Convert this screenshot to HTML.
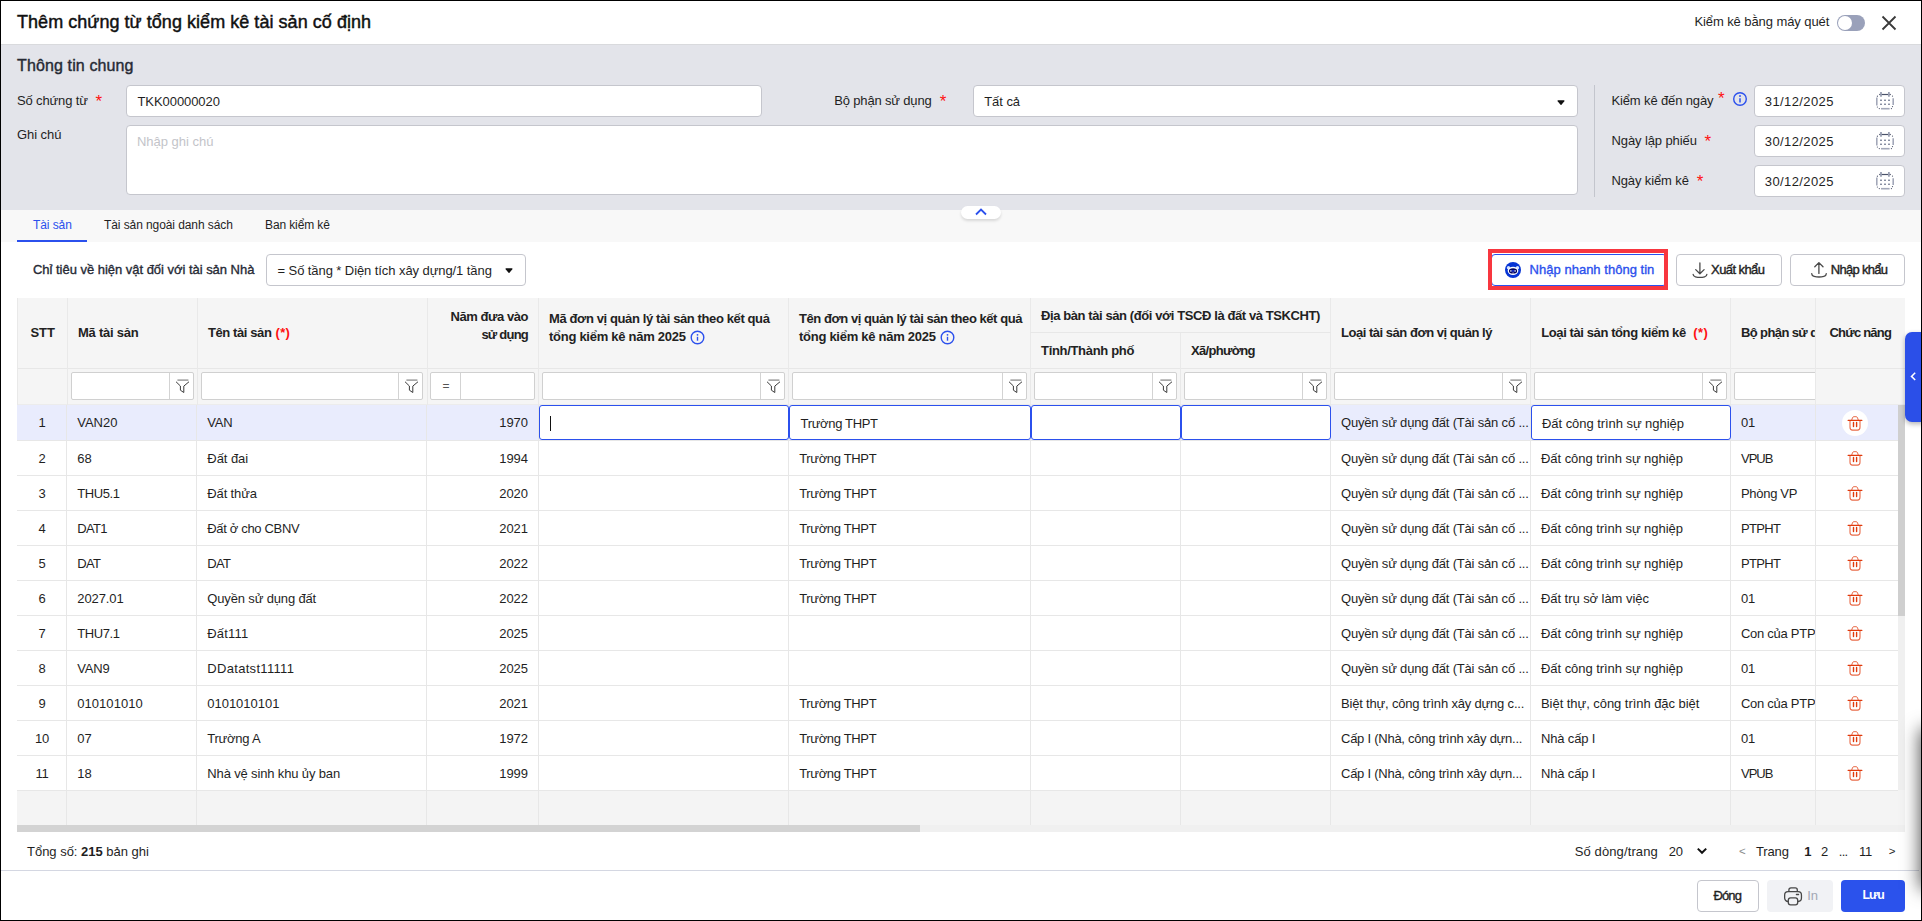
<!DOCTYPE html>
<html lang="vi"><head><meta charset="utf-8"><title>Thêm chứng từ tổng kiểm kê tài sản cố định</title>
<style>

html,body{margin:0;padding:0;}
body{width:1922px;height:921px;overflow:hidden;background:#fff;font-family:"Liberation Sans",sans-serif;}
#root{position:relative;width:1922px;height:921px;overflow:hidden;background:#fff;}
#root div,#root span.t,#root svg{position:absolute;box-sizing:border-box;}
.g{position:absolute;left:0;top:0;width:1922px;height:921px;display:block;}
span.t{white-space:pre;display:block;}
.inp{background:#fff;border:1px solid #c5c6cd;border-radius:4px;}
.fl{background:#fff;border:1px solid #d0d0d0;border-radius:2px;}
.vl{background:#e7e7e7;width:1px;}
.vlh{background:#e9e9e9;width:1px;}
.hl{background:#e7e7e7;height:1px;}
.ed{background:#fff;border:1.5px solid #2b50ed;border-radius:3px;}
</style></head><body>
<div id="root">
<header class="g">
<span class="t" style="top:12.76px;font-size:18px;line-height:18px;color:#111;letter-spacing:0.043px;-webkit-text-stroke:0.45px #111;left:17px;">Thêm chứng từ tổng kiểm kê tài sản cố định</span>
<span class="t" style="top:15.0px;font-size:13px;line-height:13px;color:#1f1f1f;letter-spacing:-0.084px;left:1694.4px;">Kiểm kê bằng máy quét</span>
<div style="left:1837px;top:15px;width:28px;height:16px;background:#9aa1ba;border-radius:8px;"></div>
<div style="left:1838px;top:16px;width:14px;height:14px;background:#fff;border-radius:7px;"></div>
<svg style="left:1881px;top:15px" width="16" height="16" viewBox="0 0 16 16"><path d="M1.5 1.5L14.5 14.5M14.5 1.5L1.5 14.5" stroke="#3a3a3a" stroke-width="1.8" fill="none"/></svg>
</header>
<section class="g">
<div style="left:0px;top:44px;width:1922px;height:166px;background:#e3e4ea;"></div>
<div style="left:0px;top:44px;width:1922px;height:1px;background:#d9dadd;"></div>
<span class="t" style="top:58.46px;font-size:16px;line-height:16px;color:#262a35;letter-spacing:0.124px;-webkit-text-stroke:0.4px #262a35;left:17px;">Thông tin chung</span>
<span class="t" style="top:94.0px;font-size:13px;line-height:13px;color:#1f1f1f;letter-spacing:-0.145px;left:17px;">Số chứng từ</span>
<span class="t" style="top:93.31px;font-size:17px;line-height:17px;color:#ff1111;left:95.4px;">*</span>
<div class="inp" style="left:126px;top:85px;width:636px;height:32px;"></div>
<span class="t" style="top:95.0px;font-size:13px;line-height:13px;color:#1f1f1f;letter-spacing:-0.073px;left:137.5px;">TKK00000020</span>
<span class="t" style="top:128.0px;font-size:13px;line-height:13px;color:#1f1f1f;letter-spacing:-0.07px;left:17px;">Ghi chú</span>
<div class="inp" style="left:126px;top:125px;width:1452px;height:70px;"></div>
<span class="t" style="top:135.0px;font-size:13px;line-height:13px;color:#c3c4c9;letter-spacing:-0.021px;left:137px;">Nhập ghi chú</span>
<span class="t" style="top:94.0px;font-size:13px;line-height:13px;color:#1f1f1f;letter-spacing:-0.171px;left:834.3px;">Bộ phận sử dụng</span>
<span class="t" style="top:93.01px;font-size:17px;line-height:17px;color:#ff1111;left:939.8000000000001px;">*</span>
<div class="inp" style="left:973px;top:85px;width:605px;height:32px;"></div>
<span class="t" style="top:95.0px;font-size:13px;line-height:13px;color:#1f1f1f;letter-spacing:-0.047px;left:984.2px;">Tất cả</span>
<svg style="left:1556.5px;top:99.6px" width="8" height="5.4" viewBox="0 0 8 5.4"><path d="M1 0.9h6L4 4.4z" fill="#111" stroke="#111" stroke-width="1.1" stroke-linejoin="round"/></svg>
<div style="left:1594px;top:85px;width:1px;height:112px;background:#c3c5cd;"></div>
<span class="t" style="top:94.0px;font-size:13px;line-height:13px;color:#1f1f1f;letter-spacing:-0.139px;left:1611.5px;">Kiểm kê đến ngày</span>
<span class="t" style="top:90.21px;font-size:17px;line-height:17px;color:#ff1111;left:1717.9px;">*</span>
<svg style="left:1732px;top:91px" width="16" height="16" viewBox="0 0 16 16"><circle cx="8" cy="8" r="6.3" fill="none" stroke="#2b50ed" stroke-width="1.4"/><path d="M8 7.2V11.6" stroke="#2b50ed" stroke-width="1.5"/><circle cx="8" cy="5" r="0.95" fill="#2b50ed"/></svg>
<div class="inp" style="left:1754px;top:85px;width:151px;height:32px;"></div>
<span class="t" style="top:94.5px;font-size:13px;line-height:13px;color:#1f1f1f;letter-spacing:0.4px;left:1764.8px;">31/12/2025</span>
<svg style="left:1876px;top:92px" width="18" height="18" viewBox="0 0 18 18" fill="none"><path d="M3.2 2.5H14.8" stroke="#4a5168" stroke-width="1.2"/><path d="M5 0V4.8M12.9 0V4.8" stroke="#9aa0b3" stroke-width="1.8"/><path d="M0.8 5.4V13.6M17.2 6.2V13" stroke="#a3a8b9" stroke-width="1.6"/><path d="M5 16.7H13.6" stroke="#a3a8b9" stroke-width="1.6"/><g fill="#4a5168"><circle cx="1.4" cy="4.2" r="0.6"/><circle cx="16.5" cy="4.1" r="0.6"/><circle cx="1.4" cy="15" r="0.6"/><circle cx="3.3" cy="16.6" r="0.6"/><circle cx="15.4" cy="16.6" r="0.6"/><circle cx="16.5" cy="14.6" r="0.6"/></g><g fill="#7d849a"><rect x="4" y="7.6" width="2" height="1.3"/><rect x="8" y="7.6" width="2" height="1.3"/><rect x="12" y="7.6" width="2" height="1.3"/><rect x="4" y="11.6" width="2" height="1.3"/><rect x="8" y="11.6" width="2" height="1.3"/><rect x="12" y="11.6" width="2" height="1.3"/></g></svg>
<div class="inp" style="left:1754px;top:125px;width:151px;height:32px;"></div>
<span class="t" style="top:134.5px;font-size:13px;line-height:13px;color:#1f1f1f;letter-spacing:0.4px;left:1764.8px;">30/12/2025</span>
<svg style="left:1876px;top:132px" width="18" height="18" viewBox="0 0 18 18" fill="none"><path d="M3.2 2.5H14.8" stroke="#4a5168" stroke-width="1.2"/><path d="M5 0V4.8M12.9 0V4.8" stroke="#9aa0b3" stroke-width="1.8"/><path d="M0.8 5.4V13.6M17.2 6.2V13" stroke="#a3a8b9" stroke-width="1.6"/><path d="M5 16.7H13.6" stroke="#a3a8b9" stroke-width="1.6"/><g fill="#4a5168"><circle cx="1.4" cy="4.2" r="0.6"/><circle cx="16.5" cy="4.1" r="0.6"/><circle cx="1.4" cy="15" r="0.6"/><circle cx="3.3" cy="16.6" r="0.6"/><circle cx="15.4" cy="16.6" r="0.6"/><circle cx="16.5" cy="14.6" r="0.6"/></g><g fill="#7d849a"><rect x="4" y="7.6" width="2" height="1.3"/><rect x="8" y="7.6" width="2" height="1.3"/><rect x="12" y="7.6" width="2" height="1.3"/><rect x="4" y="11.6" width="2" height="1.3"/><rect x="8" y="11.6" width="2" height="1.3"/><rect x="12" y="11.6" width="2" height="1.3"/></g></svg>
<span class="t" style="top:134.0px;font-size:13px;line-height:13px;color:#1f1f1f;letter-spacing:-0.103px;left:1611.5px;">Ngày lập phiếu</span>
<span class="t" style="top:133.01px;font-size:17px;line-height:17px;color:#ff1111;left:1704.5px;">*</span>
<div class="inp" style="left:1754px;top:165px;width:151px;height:32px;"></div>
<span class="t" style="top:174.5px;font-size:13px;line-height:13px;color:#1f1f1f;letter-spacing:0.4px;left:1764.8px;">30/12/2025</span>
<svg style="left:1876px;top:172px" width="18" height="18" viewBox="0 0 18 18" fill="none"><path d="M3.2 2.5H14.8" stroke="#4a5168" stroke-width="1.2"/><path d="M5 0V4.8M12.9 0V4.8" stroke="#9aa0b3" stroke-width="1.8"/><path d="M0.8 5.4V13.6M17.2 6.2V13" stroke="#a3a8b9" stroke-width="1.6"/><path d="M5 16.7H13.6" stroke="#a3a8b9" stroke-width="1.6"/><g fill="#4a5168"><circle cx="1.4" cy="4.2" r="0.6"/><circle cx="16.5" cy="4.1" r="0.6"/><circle cx="1.4" cy="15" r="0.6"/><circle cx="3.3" cy="16.6" r="0.6"/><circle cx="15.4" cy="16.6" r="0.6"/><circle cx="16.5" cy="14.6" r="0.6"/></g><g fill="#7d849a"><rect x="4" y="7.6" width="2" height="1.3"/><rect x="8" y="7.6" width="2" height="1.3"/><rect x="12" y="7.6" width="2" height="1.3"/><rect x="4" y="11.6" width="2" height="1.3"/><rect x="8" y="11.6" width="2" height="1.3"/><rect x="12" y="11.6" width="2" height="1.3"/></g></svg>
<span class="t" style="top:174.0px;font-size:13px;line-height:13px;color:#1f1f1f;letter-spacing:-0.124px;left:1611.5px;">Ngày kiểm kê</span>
<span class="t" style="top:173.11px;font-size:17px;line-height:17px;color:#ff1111;left:1696.7px;">*</span>
</section>
<nav class="g">
<div style="left:0px;top:210px;width:1922px;height:32px;background:#f8f8f8;"></div>
<span class="t" style="top:218.84px;font-size:12px;line-height:12px;color:#2b50ed;letter-spacing:-0.083px;left:33px;">Tài sản</span>
<span class="t" style="top:218.84px;font-size:12px;line-height:12px;color:#1f1f1f;letter-spacing:-0.087px;left:104px;">Tài sản ngoài danh sách</span>
<span class="t" style="top:218.84px;font-size:12px;line-height:12px;color:#1f1f1f;letter-spacing:-0.117px;left:265px;">Ban kiểm kê</span>
<div style="left:17px;top:240px;width:70px;height:2px;background:#2b50ed;"></div>
<div style="left:961px;top:205.5px;width:40px;height:13.5px;background:#fff;border-radius:7px;box-shadow:0 2px 3px rgba(0,0,0,0.13);"></div>
<svg style="left:974px;top:207.4px" width="14" height="10" viewBox="0 0 14 10"><path d="M2 7.5L7 2.5L12 7.5" stroke="#2b50ed" stroke-width="1.8" fill="none"/></svg>
</nav>
<section class="g">
<span class="t" style="top:262.5px;font-size:13px;line-height:13px;color:#262a35;letter-spacing:-0.026px;-webkit-text-stroke:0.35px #262a35;left:33px;">Chỉ tiêu về hiện vật đối với tài sản Nhà</span>
<div class="inp" style="left:266px;top:254px;width:260px;height:32px;"></div>
<span class="t" style="top:263.5px;font-size:13px;line-height:13px;color:#1f1f1f;letter-spacing:-0.079px;left:277.5px;">= Số tầng * Diện tích xây dựng/1 tầng</span>
<svg style="left:504.5px;top:268px" width="8" height="5.4" viewBox="0 0 8 5.4"><path d="M1 0.9h6L4 4.4z" fill="#111" stroke="#111" stroke-width="1.1" stroke-linejoin="round"/></svg>
<div style="left:1491px;top:254px;width:176px;height:32px;background:#fff;border:1px solid #2b50ed;border-radius:4px;"></div>
<svg style="left:1505px;top:262px" width="16" height="16" viewBox="0 0 16 16"><circle cx="8" cy="8" r="8" fill="#0634d4"/><circle cx="3.5" cy="5.7" r="1.7" fill="#d3e2ff"/><circle cx="12.5" cy="5.7" r="1.7" fill="#d3e2ff"/><ellipse cx="8" cy="8.8" rx="5.3" ry="4.1" fill="#fff"/><ellipse cx="8.05" cy="8.95" rx="4.1" ry="2.6" fill="#03035c"/><rect x="5" y="8.1" width="6" height="1.6" fill="#1a2fd0"/><rect x="5" y="8.1" width="1.6" height="1.6" fill="#a4a9ba"/><rect x="9.4" y="8.1" width="1.6" height="1.6" fill="#a4a9ba"/><rect x="7.3" y="10.6" width="1.6" height="0.7" fill="#b9bde0"/></svg>
<span class="t" style="top:263.0px;font-size:13px;line-height:13px;color:#2b50ed;letter-spacing:0.019px;-webkit-text-stroke:0.35px #2b50ed;left:1529.6px;">Nhập nhanh thông tin</span>
<div style="left:1488px;top:249px;width:180px;height:41px;border:4px solid #f8363f;"></div>
<div class="inp" style="left:1676px;top:254px;width:106px;height:32px;"></div>
<svg style="left:1692px;top:262px" width="16" height="17" viewBox="0 0 16 17" fill="none" stroke="#4a4a4a" stroke-width="1.3" stroke-linecap="round" stroke-linejoin="round"><path d="M7.9 0.9V11.6M3.7 7.6L7.9 11.8L12.1 7.6"/><path d="M1.1 12.3Q1.2 14.3 3.4 14.8Q8 15.9 12.6 14.8Q14.8 14.3 14.9 12.3"/></svg>
<span class="t" style="top:262.6px;font-size:13px;line-height:13px;color:#1f1f1f;letter-spacing:-0.595px;-webkit-text-stroke:0.4px #1f1f1f;left:1711.1px;">Xuất khẩu</span>
<div class="inp" style="left:1790px;top:254px;width:115px;height:32px;"></div>
<svg style="left:1811px;top:262px" width="16" height="17" viewBox="0 0 16 17" fill="none" stroke="#4a4a4a" stroke-width="1.3" stroke-linecap="round" stroke-linejoin="round"><path d="M7.9 11.4V0.7M3.8 4.8L7.9 0.6L12 4.8"/><path d="M0.7 11.6Q0.8 13.8 3.1 14.4Q8 15.6 12.9 14.4Q15.2 13.8 15.3 11.6"/></svg>
<span class="t" style="top:262.7px;font-size:13px;line-height:13px;color:#1f1f1f;letter-spacing:-0.688px;-webkit-text-stroke:0.4px #1f1f1f;left:1830.7px;">Nhập khẩu</span>
</section>
<main class="g">
<div style="left:17px;top:298px;width:1888px;height:107px;background:#f5f5f5;"></div>
<div style="left:17px;top:790px;width:1888px;height:35px;background:#f4f4f4;"></div>
<div style="left:17px;top:825px;width:1888px;height:7px;background:#f0f0f0;"></div>
<div style="left:17px;top:825px;width:903px;height:7px;background:#d3d3d3;"></div>
<div style="left:17px;top:405px;width:1881px;height:35px;background:#e9ecfd;"></div>
<div class="hl" style="left:17px;top:440px;width:1881px;height:1px;"></div>
<div class="hl" style="left:17px;top:475px;width:1881px;height:1px;"></div>
<div class="hl" style="left:17px;top:510px;width:1881px;height:1px;"></div>
<div class="hl" style="left:17px;top:545px;width:1881px;height:1px;"></div>
<div class="hl" style="left:17px;top:580px;width:1881px;height:1px;"></div>
<div class="hl" style="left:17px;top:615px;width:1881px;height:1px;"></div>
<div class="hl" style="left:17px;top:650px;width:1881px;height:1px;"></div>
<div class="hl" style="left:17px;top:685px;width:1881px;height:1px;"></div>
<div class="hl" style="left:17px;top:720px;width:1881px;height:1px;"></div>
<div class="hl" style="left:17px;top:755px;width:1881px;height:1px;"></div>
<div class="hl" style="left:17px;top:790px;width:1881px;height:1px;"></div>
<div class="hl" style="left:17px;top:368px;width:1888px;height:1px;"></div>
<div style="left:17px;top:404px;width:1888px;height:1px;background:#ececec;"></div>
<div class="vlh" style="left:17px;top:298px;width:1px;height:107px;"></div>
<div class="vlh" style="left:67px;top:298px;width:1px;height:107px;"></div>
<div class="vl" style="left:66px;top:405px;width:1px;height:420px;"></div>
<div class="vlh" style="left:197px;top:298px;width:1px;height:107px;"></div>
<div class="vl" style="left:196px;top:405px;width:1px;height:420px;"></div>
<div class="vlh" style="left:427px;top:298px;width:1px;height:107px;"></div>
<div class="vl" style="left:426px;top:405px;width:1px;height:420px;"></div>
<div class="vlh" style="left:538px;top:298px;width:1px;height:107px;"></div>
<div class="vl" style="left:538px;top:405px;width:1px;height:420px;"></div>
<div class="vlh" style="left:788px;top:298px;width:1px;height:107px;"></div>
<div class="vl" style="left:788px;top:405px;width:1px;height:420px;"></div>
<div class="vlh" style="left:1030px;top:298px;width:1px;height:107px;"></div>
<div class="vl" style="left:1030px;top:405px;width:1px;height:420px;"></div>
<div class="vlh" style="left:1180px;top:333px;width:1px;height:72px;"></div>
<div class="vl" style="left:1180px;top:405px;width:1px;height:420px;"></div>
<div class="vlh" style="left:1330px;top:298px;width:1px;height:107px;"></div>
<div class="vl" style="left:1330px;top:405px;width:1px;height:420px;"></div>
<div class="vlh" style="left:1530px;top:298px;width:1px;height:107px;"></div>
<div class="vl" style="left:1530px;top:405px;width:1px;height:420px;"></div>
<div class="vlh" style="left:1730px;top:298px;width:1px;height:107px;"></div>
<div class="vl" style="left:1730px;top:405px;width:1px;height:420px;"></div>
<div class="vlh" style="left:1815px;top:298px;width:1px;height:107px;"></div>
<div class="vl" style="left:1815px;top:405px;width:1px;height:420px;"></div>
<div class="hl" style="left:1030px;top:332px;width:301px;height:1px;"></div>
<div style="left:1898px;top:405px;width:7px;height:385px;background:#f0f0f0;"></div>
<div style="left:1898px;top:405px;width:7px;height:211px;background:#cfcfcf;"></div>
<span class="t" style="top:326.0px;font-size:13px;line-height:13px;color:#222;font-weight:700;letter-spacing:-0.086px;left:30.5px;">STT</span>
<span class="t" style="top:326.0px;font-size:13px;line-height:13px;color:#222;font-weight:700;letter-spacing:-0.23px;left:78px;">Mã tài sản</span>
<span class="t" style="top:326.0px;font-size:13px;line-height:13px;color:#222;font-weight:700;letter-spacing:-0.403px;left:208px;">Tên tài sản</span>
<span class="t" style="top:326.0px;font-size:13px;line-height:13px;color:#ff1111;font-weight:700;letter-spacing:0.336px;left:275.5px;">(*)</span>
<span class="t" style="top:310.0px;font-size:13px;line-height:13px;color:#222;font-weight:700;letter-spacing:-0.45px;right:1394px;">Năm đưa vào</span>
<span class="t" style="top:328.0px;font-size:13px;line-height:13px;color:#222;font-weight:700;letter-spacing:-0.774px;right:1394px;">sử dụng</span>
<span class="t" style="top:312.0px;font-size:13px;line-height:13px;color:#222;font-weight:700;letter-spacing:-0.391px;left:549px;">Mã đơn vị quản lý tài sản theo kết quả</span>
<span class="t" style="top:330.0px;font-size:13px;line-height:13px;color:#222;font-weight:700;letter-spacing:-0.273px;left:549px;">tổng kiểm kê năm 2025</span>
<span class="t" style="top:312.0px;font-size:13px;line-height:13px;color:#222;font-weight:700;letter-spacing:-0.448px;left:799px;">Tên đơn vị quản lý tài sản theo kết quả</span>
<span class="t" style="top:330.0px;font-size:13px;line-height:13px;color:#222;font-weight:700;letter-spacing:-0.273px;left:799px;">tổng kiểm kê năm 2025</span>
<svg style="left:689.5px;top:330.2px" width="15" height="15" viewBox="0 0 15 15"><g transform="translate(0.5 0.5)"><circle cx="7" cy="7" r="6.3" fill="none" stroke="#2b50ed" stroke-width="1.4"/><path d="M7 6.3V10.2" stroke="#2b50ed" stroke-width="1.4"/><circle cx="7" cy="4.3" r="0.9" fill="#2b50ed"/></g></svg>
<svg style="left:939.5px;top:330.2px" width="15" height="15" viewBox="0 0 15 15"><g transform="translate(0.5 0.5)"><circle cx="7" cy="7" r="6.3" fill="none" stroke="#2b50ed" stroke-width="1.4"/><path d="M7 6.3V10.2" stroke="#2b50ed" stroke-width="1.4"/><circle cx="7" cy="4.3" r="0.9" fill="#2b50ed"/></g></svg>
<span class="t" style="top:309.0px;font-size:13px;line-height:13px;color:#222;font-weight:700;letter-spacing:-0.409px;left:1041px;">Địa bàn tài sản (đối với TSCĐ là đất và TSKCHT)</span>
<span class="t" style="top:344.0px;font-size:13px;line-height:13px;color:#222;font-weight:700;letter-spacing:-0.315px;left:1041px;">Tỉnh/Thành phố</span>
<span class="t" style="top:344.0px;font-size:13px;line-height:13px;color:#222;font-weight:700;letter-spacing:-0.693px;left:1191px;">Xã/phường</span>
<span class="t" style="top:326.0px;font-size:13px;line-height:13px;color:#222;font-weight:700;letter-spacing:-0.478px;left:1341px;">Loại tài sản đơn vị quản lý</span>
<span class="t" style="top:326.0px;font-size:13px;line-height:13px;color:#222;font-weight:700;letter-spacing:-0.405px;left:1541.3px;">Loại tài sản tổng kiểm kê</span>
<span class="t" style="top:326.0px;font-size:13px;line-height:13px;color:#ff1111;font-weight:700;letter-spacing:0.4px;left:1693.2px;">(*)</span>
<span class="t" style="top:326.0px;font-size:13px;line-height:13px;color:#222;font-weight:700;letter-spacing:-0.61px;left:1741px;width:74px;overflow:hidden;">Bộ phận sử dụng</span>
<div style="left:1816px;top:298px;width:89px;height:70px;background:#f5f5f5;"></div>
<span class="t" style="top:326.0px;font-size:13px;line-height:13px;color:#222;font-weight:700;letter-spacing:-0.781px;left:1829.5px;">Chức năng</span>
<div class="fl" style="left:71px;top:372px;width:123px;height:28px;"></div>
<div style="left:169px;top:373px;width:1px;height:26px;background:#d3d3d3;"></div>
<svg style="left:174.7px;top:379px" width="15" height="15" viewBox="0 0 15 15" fill="none" stroke="#3a3a3a" stroke-width="1" stroke-linejoin="round" stroke-linecap="round"><path d="M2.4 1.1H13.4" stroke="#8c8c8c" stroke-width="1.3" stroke-linecap="butt"/><path d="M1.3 3L5.4 7V11.2L8.8 13.5V7.1L13.7 3"/></svg>
<div class="fl" style="left:201px;top:372px;width:222px;height:28px;"></div>
<div style="left:398px;top:373px;width:1px;height:26px;background:#d3d3d3;"></div>
<svg style="left:403.7px;top:379px" width="15" height="15" viewBox="0 0 15 15" fill="none" stroke="#3a3a3a" stroke-width="1" stroke-linejoin="round" stroke-linecap="round"><path d="M2.4 1.1H13.4" stroke="#8c8c8c" stroke-width="1.3" stroke-linecap="butt"/><path d="M1.3 3L5.4 7V11.2L8.8 13.5V7.1L13.7 3"/></svg>
<div class="fl" style="left:430px;top:372px;width:105px;height:28px;"></div>
<div style="left:460px;top:373px;width:1px;height:26px;background:#d3d3d3;"></div>
<span class="t" style="top:379.84px;font-size:12px;line-height:12px;color:#555;letter-spacing:-0.1px;left:442.5px;">=</span>
<div class="fl" style="left:542px;top:372px;width:243px;height:28px;"></div>
<div style="left:760px;top:373px;width:1px;height:26px;background:#d3d3d3;"></div>
<svg style="left:765.7px;top:379px" width="15" height="15" viewBox="0 0 15 15" fill="none" stroke="#3a3a3a" stroke-width="1" stroke-linejoin="round" stroke-linecap="round"><path d="M2.4 1.1H13.4" stroke="#8c8c8c" stroke-width="1.3" stroke-linecap="butt"/><path d="M1.3 3L5.4 7V11.2L8.8 13.5V7.1L13.7 3"/></svg>
<div class="fl" style="left:792px;top:372px;width:235px;height:28px;"></div>
<div style="left:1002px;top:373px;width:1px;height:26px;background:#d3d3d3;"></div>
<svg style="left:1007.7px;top:379px" width="15" height="15" viewBox="0 0 15 15" fill="none" stroke="#3a3a3a" stroke-width="1" stroke-linejoin="round" stroke-linecap="round"><path d="M2.4 1.1H13.4" stroke="#8c8c8c" stroke-width="1.3" stroke-linecap="butt"/><path d="M1.3 3L5.4 7V11.2L8.8 13.5V7.1L13.7 3"/></svg>
<div class="fl" style="left:1034px;top:372px;width:143px;height:28px;"></div>
<div style="left:1152px;top:373px;width:1px;height:26px;background:#d3d3d3;"></div>
<svg style="left:1157.7px;top:379px" width="15" height="15" viewBox="0 0 15 15" fill="none" stroke="#3a3a3a" stroke-width="1" stroke-linejoin="round" stroke-linecap="round"><path d="M2.4 1.1H13.4" stroke="#8c8c8c" stroke-width="1.3" stroke-linecap="butt"/><path d="M1.3 3L5.4 7V11.2L8.8 13.5V7.1L13.7 3"/></svg>
<div class="fl" style="left:1184px;top:372px;width:143px;height:28px;"></div>
<div style="left:1302px;top:373px;width:1px;height:26px;background:#d3d3d3;"></div>
<svg style="left:1307.7px;top:379px" width="15" height="15" viewBox="0 0 15 15" fill="none" stroke="#3a3a3a" stroke-width="1" stroke-linejoin="round" stroke-linecap="round"><path d="M2.4 1.1H13.4" stroke="#8c8c8c" stroke-width="1.3" stroke-linecap="butt"/><path d="M1.3 3L5.4 7V11.2L8.8 13.5V7.1L13.7 3"/></svg>
<div class="fl" style="left:1334px;top:372px;width:193px;height:28px;"></div>
<div style="left:1502px;top:373px;width:1px;height:26px;background:#d3d3d3;"></div>
<svg style="left:1507.7px;top:379px" width="15" height="15" viewBox="0 0 15 15" fill="none" stroke="#3a3a3a" stroke-width="1" stroke-linejoin="round" stroke-linecap="round"><path d="M2.4 1.1H13.4" stroke="#8c8c8c" stroke-width="1.3" stroke-linecap="butt"/><path d="M1.3 3L5.4 7V11.2L8.8 13.5V7.1L13.7 3"/></svg>
<div class="fl" style="left:1534px;top:372px;width:193px;height:28px;"></div>
<div style="left:1702px;top:373px;width:1px;height:26px;background:#d3d3d3;"></div>
<svg style="left:1707.7px;top:379px" width="15" height="15" viewBox="0 0 15 15" fill="none" stroke="#3a3a3a" stroke-width="1" stroke-linejoin="round" stroke-linecap="round"><path d="M2.4 1.1H13.4" stroke="#8c8c8c" stroke-width="1.3" stroke-linecap="butt"/><path d="M1.3 3L5.4 7V11.2L8.8 13.5V7.1L13.7 3"/></svg>
<div class="fl" style="left:1734px;top:372px;width:90px;height:28px;"></div>
<div style="left:1815px;top:369px;width:90px;height:35px;background:#f5f5f5;"></div>
<div class="vlh" style="left:1815px;top:298px;width:1px;height:107px;"></div>
<div class="vl" style="left:1815px;top:405px;width:1px;height:420px;"></div>
<div class="ed" style="left:539px;top:405px;width:250px;height:35px;"></div>
<div class="ed" style="left:789px;top:405px;width:242px;height:35px;"></div>
<div class="ed" style="left:1031px;top:405px;width:150px;height:35px;"></div>
<div class="ed" style="left:1181px;top:405px;width:150px;height:35px;"></div>
<div class="ed" style="left:1531px;top:405px;width:200px;height:35px;"></div>
<div style="left:550px;top:416px;width:1px;height:15px;background:#111;"></div>
<span class="t" style="top:416.0px;font-size:13px;line-height:13px;color:#1f1f1f;letter-spacing:-0.15px;left:-158px;width:400px;text-align:center;">1</span>
<span class="t" style="top:416.0px;font-size:13px;line-height:13px;color:#1f1f1f;letter-spacing:-0.036px;left:77.3px;">VAN20</span>
<span class="t" style="top:416.0px;font-size:13px;line-height:13px;color:#1f1f1f;letter-spacing:-0.188px;left:207.3px;">VAN</span>
<span class="t" style="top:416.0px;font-size:13px;line-height:13px;color:#1f1f1f;letter-spacing:-0.111px;right:1394.2px;">1970</span>
<span class="t" style="top:417.0px;font-size:13px;line-height:13px;color:#1f1f1f;letter-spacing:-0.341px;left:800.6px;">Trường THPT</span>
<span class="t" style="top:416.0px;font-size:13px;line-height:13px;color:#1f1f1f;letter-spacing:-0.182px;left:1341px;">Quyền sử dụng đất (Tài sản cố ...</span>
<span class="t" style="top:417.0px;font-size:13px;line-height:13px;color:#1f1f1f;letter-spacing:-0.054px;left:1542px;">Đất công trình sự nghiệp</span>
<span class="t" style="top:416.0px;font-size:13px;line-height:13px;color:#1f1f1f;letter-spacing:-0.15px;left:1741px;">01</span>
<div style="left:1842px;top:410px;width:26px;height:26px;background:#fff;border-radius:13px;"></div>
<svg style="left:1847px;top:415px" width="16" height="16" viewBox="0 0 16 16" fill="none" stroke="#e03a0c"><path d="M1.2 5.45H14.8" stroke-width="1.3" stroke-linecap="round"/><path d="M4.7 5.1L5.5 2.7Q5.9 1.7 7 1.7H9Q10.1 1.7 10.5 2.7L11.3 5.1" stroke-width="1" opacity=".75"/><path d="M3 5.8V12.3Q3 15.1 5.5 15.1H10.5Q13 15.1 13 12.3V5.8" stroke-width="1.1" opacity=".75"/><path d="M6.5 7.4V11.6M9.6 7.4V11.6" stroke-width="1.4" stroke-linecap="round"/></svg>
<span class="t" style="top:452.0px;font-size:13px;line-height:13px;color:#1f1f1f;letter-spacing:-0.15px;left:-158px;width:400px;text-align:center;">2</span>
<span class="t" style="top:452.0px;font-size:13px;line-height:13px;color:#1f1f1f;letter-spacing:-0.15px;left:77.3px;">68</span>
<span class="t" style="top:452.0px;font-size:13px;line-height:13px;color:#1f1f1f;letter-spacing:-0.052px;left:207.3px;">Đất đai</span>
<span class="t" style="top:452.0px;font-size:13px;line-height:13px;color:#1f1f1f;letter-spacing:-0.111px;right:1394.2px;">1994</span>
<span class="t" style="top:452.0px;font-size:13px;line-height:13px;color:#1f1f1f;letter-spacing:-0.341px;left:799.2px;">Trường THPT</span>
<span class="t" style="top:452.0px;font-size:13px;line-height:13px;color:#1f1f1f;letter-spacing:-0.182px;left:1341px;">Quyền sử dụng đất (Tài sản cố ...</span>
<span class="t" style="top:452.0px;font-size:13px;line-height:13px;color:#1f1f1f;letter-spacing:-0.054px;left:1541px;">Đất công trình sự nghiệp</span>
<span class="t" style="top:452.0px;font-size:13px;line-height:13px;color:#1f1f1f;letter-spacing:-1.005px;left:1741px;">VPUB</span>
<svg style="left:1847px;top:450px" width="16" height="16" viewBox="0 0 16 16" fill="none" stroke="#e03a0c"><path d="M1.2 5.45H14.8" stroke-width="1.3" stroke-linecap="round"/><path d="M4.7 5.1L5.5 2.7Q5.9 1.7 7 1.7H9Q10.1 1.7 10.5 2.7L11.3 5.1" stroke-width="1" opacity=".75"/><path d="M3 5.8V12.3Q3 15.1 5.5 15.1H10.5Q13 15.1 13 12.3V5.8" stroke-width="1.1" opacity=".75"/><path d="M6.5 7.4V11.6M9.6 7.4V11.6" stroke-width="1.4" stroke-linecap="round"/></svg>
<span class="t" style="top:487.0px;font-size:13px;line-height:13px;color:#1f1f1f;letter-spacing:-0.15px;left:-158px;width:400px;text-align:center;">3</span>
<span class="t" style="top:487.0px;font-size:13px;line-height:13px;color:#1f1f1f;letter-spacing:-0.421px;left:77.3px;">THU5.1</span>
<span class="t" style="top:487.0px;font-size:13px;line-height:13px;color:#1f1f1f;letter-spacing:-0.134px;left:207.3px;">Đất thửa</span>
<span class="t" style="top:487.0px;font-size:13px;line-height:13px;color:#1f1f1f;letter-spacing:-0.111px;right:1394.2px;">2020</span>
<span class="t" style="top:487.0px;font-size:13px;line-height:13px;color:#1f1f1f;letter-spacing:-0.341px;left:799.2px;">Trường THPT</span>
<span class="t" style="top:487.0px;font-size:13px;line-height:13px;color:#1f1f1f;letter-spacing:-0.182px;left:1341px;">Quyền sử dụng đất (Tài sản cố ...</span>
<span class="t" style="top:487.0px;font-size:13px;line-height:13px;color:#1f1f1f;letter-spacing:-0.054px;left:1541px;">Đất công trình sự nghiệp</span>
<span class="t" style="top:487.0px;font-size:13px;line-height:13px;color:#1f1f1f;letter-spacing:-0.308px;left:1741px;">Phòng VP</span>
<svg style="left:1847px;top:485px" width="16" height="16" viewBox="0 0 16 16" fill="none" stroke="#e03a0c"><path d="M1.2 5.45H14.8" stroke-width="1.3" stroke-linecap="round"/><path d="M4.7 5.1L5.5 2.7Q5.9 1.7 7 1.7H9Q10.1 1.7 10.5 2.7L11.3 5.1" stroke-width="1" opacity=".75"/><path d="M3 5.8V12.3Q3 15.1 5.5 15.1H10.5Q13 15.1 13 12.3V5.8" stroke-width="1.1" opacity=".75"/><path d="M6.5 7.4V11.6M9.6 7.4V11.6" stroke-width="1.4" stroke-linecap="round"/></svg>
<span class="t" style="top:522.0px;font-size:13px;line-height:13px;color:#1f1f1f;letter-spacing:-0.15px;left:-158px;width:400px;text-align:center;">4</span>
<span class="t" style="top:522.0px;font-size:13px;line-height:13px;color:#1f1f1f;letter-spacing:-0.725px;left:77.3px;">DAT1</span>
<span class="t" style="top:522.0px;font-size:13px;line-height:13px;color:#1f1f1f;letter-spacing:-0.329px;left:207.3px;">Đất ở cho CBNV</span>
<span class="t" style="top:522.0px;font-size:13px;line-height:13px;color:#1f1f1f;letter-spacing:-0.111px;right:1394.2px;">2021</span>
<span class="t" style="top:522.0px;font-size:13px;line-height:13px;color:#1f1f1f;letter-spacing:-0.341px;left:799.2px;">Trường THPT</span>
<span class="t" style="top:522.0px;font-size:13px;line-height:13px;color:#1f1f1f;letter-spacing:-0.182px;left:1341px;">Quyền sử dụng đất (Tài sản cố ...</span>
<span class="t" style="top:522.0px;font-size:13px;line-height:13px;color:#1f1f1f;letter-spacing:-0.054px;left:1541px;">Đất công trình sự nghiệp</span>
<span class="t" style="top:522.0px;font-size:13px;line-height:13px;color:#1f1f1f;letter-spacing:-0.684px;left:1741px;">PTPHT</span>
<svg style="left:1847px;top:520px" width="16" height="16" viewBox="0 0 16 16" fill="none" stroke="#e03a0c"><path d="M1.2 5.45H14.8" stroke-width="1.3" stroke-linecap="round"/><path d="M4.7 5.1L5.5 2.7Q5.9 1.7 7 1.7H9Q10.1 1.7 10.5 2.7L11.3 5.1" stroke-width="1" opacity=".75"/><path d="M3 5.8V12.3Q3 15.1 5.5 15.1H10.5Q13 15.1 13 12.3V5.8" stroke-width="1.1" opacity=".75"/><path d="M6.5 7.4V11.6M9.6 7.4V11.6" stroke-width="1.4" stroke-linecap="round"/></svg>
<span class="t" style="top:557.0px;font-size:13px;line-height:13px;color:#1f1f1f;letter-spacing:-0.15px;left:-158px;width:400px;text-align:center;">5</span>
<span class="t" style="top:557.0px;font-size:13px;line-height:13px;color:#1f1f1f;letter-spacing:-0.678px;left:77.3px;">DAT</span>
<span class="t" style="top:557.0px;font-size:13px;line-height:13px;color:#1f1f1f;letter-spacing:-0.678px;left:207.3px;">DAT</span>
<span class="t" style="top:557.0px;font-size:13px;line-height:13px;color:#1f1f1f;letter-spacing:-0.111px;right:1394.2px;">2022</span>
<span class="t" style="top:557.0px;font-size:13px;line-height:13px;color:#1f1f1f;letter-spacing:-0.341px;left:799.2px;">Trường THPT</span>
<span class="t" style="top:557.0px;font-size:13px;line-height:13px;color:#1f1f1f;letter-spacing:-0.182px;left:1341px;">Quyền sử dụng đất (Tài sản cố ...</span>
<span class="t" style="top:557.0px;font-size:13px;line-height:13px;color:#1f1f1f;letter-spacing:-0.054px;left:1541px;">Đất công trình sự nghiệp</span>
<span class="t" style="top:557.0px;font-size:13px;line-height:13px;color:#1f1f1f;letter-spacing:-0.684px;left:1741px;">PTPHT</span>
<svg style="left:1847px;top:555px" width="16" height="16" viewBox="0 0 16 16" fill="none" stroke="#e03a0c"><path d="M1.2 5.45H14.8" stroke-width="1.3" stroke-linecap="round"/><path d="M4.7 5.1L5.5 2.7Q5.9 1.7 7 1.7H9Q10.1 1.7 10.5 2.7L11.3 5.1" stroke-width="1" opacity=".75"/><path d="M3 5.8V12.3Q3 15.1 5.5 15.1H10.5Q13 15.1 13 12.3V5.8" stroke-width="1.1" opacity=".75"/><path d="M6.5 7.4V11.6M9.6 7.4V11.6" stroke-width="1.4" stroke-linecap="round"/></svg>
<span class="t" style="top:592.0px;font-size:13px;line-height:13px;color:#1f1f1f;letter-spacing:-0.15px;left:-158px;width:400px;text-align:center;">6</span>
<span class="t" style="top:592.0px;font-size:13px;line-height:13px;color:#1f1f1f;letter-spacing:-0.102px;left:77.3px;">2027.01</span>
<span class="t" style="top:592.0px;font-size:13px;line-height:13px;color:#1f1f1f;letter-spacing:-0.153px;left:207.3px;">Quyền sử dụng đất</span>
<span class="t" style="top:592.0px;font-size:13px;line-height:13px;color:#1f1f1f;letter-spacing:-0.111px;right:1394.2px;">2022</span>
<span class="t" style="top:592.0px;font-size:13px;line-height:13px;color:#1f1f1f;letter-spacing:-0.341px;left:799.2px;">Trường THPT</span>
<span class="t" style="top:592.0px;font-size:13px;line-height:13px;color:#1f1f1f;letter-spacing:-0.182px;left:1341px;">Quyền sử dụng đất (Tài sản cố ...</span>
<span class="t" style="top:592.0px;font-size:13px;line-height:13px;color:#1f1f1f;letter-spacing:-0.059px;left:1541px;">Đất trụ sở làm việc</span>
<span class="t" style="top:592.0px;font-size:13px;line-height:13px;color:#1f1f1f;letter-spacing:-0.15px;left:1741px;">01</span>
<svg style="left:1847px;top:590px" width="16" height="16" viewBox="0 0 16 16" fill="none" stroke="#e03a0c"><path d="M1.2 5.45H14.8" stroke-width="1.3" stroke-linecap="round"/><path d="M4.7 5.1L5.5 2.7Q5.9 1.7 7 1.7H9Q10.1 1.7 10.5 2.7L11.3 5.1" stroke-width="1" opacity=".75"/><path d="M3 5.8V12.3Q3 15.1 5.5 15.1H10.5Q13 15.1 13 12.3V5.8" stroke-width="1.1" opacity=".75"/><path d="M6.5 7.4V11.6M9.6 7.4V11.6" stroke-width="1.4" stroke-linecap="round"/></svg>
<span class="t" style="top:627.0px;font-size:13px;line-height:13px;color:#1f1f1f;letter-spacing:-0.15px;left:-158px;width:400px;text-align:center;">7</span>
<span class="t" style="top:627.0px;font-size:13px;line-height:13px;color:#1f1f1f;letter-spacing:-0.421px;left:77.3px;">THU7.1</span>
<span class="t" style="top:627.0px;font-size:13px;line-height:13px;color:#1f1f1f;letter-spacing:0.178px;left:207.3px;">Đất111</span>
<span class="t" style="top:627.0px;font-size:13px;line-height:13px;color:#1f1f1f;letter-spacing:-0.111px;right:1394.2px;">2025</span>
<span class="t" style="top:627.0px;font-size:13px;line-height:13px;color:#1f1f1f;letter-spacing:-0.182px;left:1341px;">Quyền sử dụng đất (Tài sản cố ...</span>
<span class="t" style="top:627.0px;font-size:13px;line-height:13px;color:#1f1f1f;letter-spacing:-0.054px;left:1541px;">Đất công trình sự nghiệp</span>
<span class="t" style="top:627.0px;font-size:13px;line-height:13px;color:#1f1f1f;letter-spacing:-0.272px;left:1741px;width:74px;overflow:hidden;">Con của PTPHT</span>
<svg style="left:1847px;top:625px" width="16" height="16" viewBox="0 0 16 16" fill="none" stroke="#e03a0c"><path d="M1.2 5.45H14.8" stroke-width="1.3" stroke-linecap="round"/><path d="M4.7 5.1L5.5 2.7Q5.9 1.7 7 1.7H9Q10.1 1.7 10.5 2.7L11.3 5.1" stroke-width="1" opacity=".75"/><path d="M3 5.8V12.3Q3 15.1 5.5 15.1H10.5Q13 15.1 13 12.3V5.8" stroke-width="1.1" opacity=".75"/><path d="M6.5 7.4V11.6M9.6 7.4V11.6" stroke-width="1.4" stroke-linecap="round"/></svg>
<span class="t" style="top:662.0px;font-size:13px;line-height:13px;color:#1f1f1f;letter-spacing:-0.15px;left:-158px;width:400px;text-align:center;">8</span>
<span class="t" style="top:662.0px;font-size:13px;line-height:13px;color:#1f1f1f;letter-spacing:-0.203px;left:77.3px;">VAN9</span>
<span class="t" style="top:662.0px;font-size:13px;line-height:13px;color:#1f1f1f;letter-spacing:0.31px;left:207.3px;">DDatatst11111</span>
<span class="t" style="top:662.0px;font-size:13px;line-height:13px;color:#1f1f1f;letter-spacing:-0.111px;right:1394.2px;">2025</span>
<span class="t" style="top:662.0px;font-size:13px;line-height:13px;color:#1f1f1f;letter-spacing:-0.182px;left:1341px;">Quyền sử dụng đất (Tài sản cố ...</span>
<span class="t" style="top:662.0px;font-size:13px;line-height:13px;color:#1f1f1f;letter-spacing:-0.054px;left:1541px;">Đất công trình sự nghiệp</span>
<span class="t" style="top:662.0px;font-size:13px;line-height:13px;color:#1f1f1f;letter-spacing:-0.15px;left:1741px;">01</span>
<svg style="left:1847px;top:660px" width="16" height="16" viewBox="0 0 16 16" fill="none" stroke="#e03a0c"><path d="M1.2 5.45H14.8" stroke-width="1.3" stroke-linecap="round"/><path d="M4.7 5.1L5.5 2.7Q5.9 1.7 7 1.7H9Q10.1 1.7 10.5 2.7L11.3 5.1" stroke-width="1" opacity=".75"/><path d="M3 5.8V12.3Q3 15.1 5.5 15.1H10.5Q13 15.1 13 12.3V5.8" stroke-width="1.1" opacity=".75"/><path d="M6.5 7.4V11.6M9.6 7.4V11.6" stroke-width="1.4" stroke-linecap="round"/></svg>
<span class="t" style="top:697.0px;font-size:13px;line-height:13px;color:#1f1f1f;letter-spacing:-0.15px;left:-158px;width:400px;text-align:center;">9</span>
<span class="t" style="top:697.0px;font-size:13px;line-height:13px;color:#1f1f1f;letter-spacing:0.039px;left:77.3px;">010101010</span>
<span class="t" style="top:697.0px;font-size:13px;line-height:13px;color:#1f1f1f;letter-spacing:-0.025px;left:207.3px;">0101010101</span>
<span class="t" style="top:697.0px;font-size:13px;line-height:13px;color:#1f1f1f;letter-spacing:-0.111px;right:1394.2px;">2021</span>
<span class="t" style="top:697.0px;font-size:13px;line-height:13px;color:#1f1f1f;letter-spacing:-0.341px;left:799.2px;">Trường THPT</span>
<span class="t" style="top:697.0px;font-size:13px;line-height:13px;color:#1f1f1f;letter-spacing:-0.182px;left:1341px;">Biệt thự, công trình xây dựng c...</span>
<span class="t" style="top:697.0px;font-size:13px;line-height:13px;color:#1f1f1f;letter-spacing:-0.049px;left:1541px;">Biệt thự, công trình đặc biệt</span>
<span class="t" style="top:697.0px;font-size:13px;line-height:13px;color:#1f1f1f;letter-spacing:-0.272px;left:1741px;width:74px;overflow:hidden;">Con của PTPHT</span>
<svg style="left:1847px;top:695px" width="16" height="16" viewBox="0 0 16 16" fill="none" stroke="#e03a0c"><path d="M1.2 5.45H14.8" stroke-width="1.3" stroke-linecap="round"/><path d="M4.7 5.1L5.5 2.7Q5.9 1.7 7 1.7H9Q10.1 1.7 10.5 2.7L11.3 5.1" stroke-width="1" opacity=".75"/><path d="M3 5.8V12.3Q3 15.1 5.5 15.1H10.5Q13 15.1 13 12.3V5.8" stroke-width="1.1" opacity=".75"/><path d="M6.5 7.4V11.6M9.6 7.4V11.6" stroke-width="1.4" stroke-linecap="round"/></svg>
<span class="t" style="top:732.0px;font-size:13px;line-height:13px;color:#1f1f1f;letter-spacing:-0.15px;left:-158px;width:400px;text-align:center;">10</span>
<span class="t" style="top:732.0px;font-size:13px;line-height:13px;color:#1f1f1f;letter-spacing:-0.15px;left:77.3px;">07</span>
<span class="t" style="top:732.0px;font-size:13px;line-height:13px;color:#1f1f1f;letter-spacing:-0.237px;left:207.3px;">Trường A</span>
<span class="t" style="top:732.0px;font-size:13px;line-height:13px;color:#1f1f1f;letter-spacing:-0.111px;right:1394.2px;">1972</span>
<span class="t" style="top:732.0px;font-size:13px;line-height:13px;color:#1f1f1f;letter-spacing:-0.341px;left:799.2px;">Trường THPT</span>
<span class="t" style="top:732.0px;font-size:13px;line-height:13px;color:#1f1f1f;letter-spacing:-0.249px;left:1341px;">Cấp I (Nhà, công trình xây dựn...</span>
<span class="t" style="top:732.0px;font-size:13px;line-height:13px;color:#1f1f1f;letter-spacing:-0.158px;left:1541px;">Nhà cấp I</span>
<span class="t" style="top:732.0px;font-size:13px;line-height:13px;color:#1f1f1f;letter-spacing:-0.15px;left:1741px;">01</span>
<svg style="left:1847px;top:730px" width="16" height="16" viewBox="0 0 16 16" fill="none" stroke="#e03a0c"><path d="M1.2 5.45H14.8" stroke-width="1.3" stroke-linecap="round"/><path d="M4.7 5.1L5.5 2.7Q5.9 1.7 7 1.7H9Q10.1 1.7 10.5 2.7L11.3 5.1" stroke-width="1" opacity=".75"/><path d="M3 5.8V12.3Q3 15.1 5.5 15.1H10.5Q13 15.1 13 12.3V5.8" stroke-width="1.1" opacity=".75"/><path d="M6.5 7.4V11.6M9.6 7.4V11.6" stroke-width="1.4" stroke-linecap="round"/></svg>
<span class="t" style="top:767.0px;font-size:13px;line-height:13px;color:#1f1f1f;letter-spacing:-0.15px;left:-158px;width:400px;text-align:center;">11</span>
<span class="t" style="top:767.0px;font-size:13px;line-height:13px;color:#1f1f1f;letter-spacing:-0.15px;left:77.3px;">18</span>
<span class="t" style="top:767.0px;font-size:13px;line-height:13px;color:#1f1f1f;letter-spacing:-0.142px;left:207.3px;">Nhà vệ sinh khu ủy ban</span>
<span class="t" style="top:767.0px;font-size:13px;line-height:13px;color:#1f1f1f;letter-spacing:-0.111px;right:1394.2px;">1999</span>
<span class="t" style="top:767.0px;font-size:13px;line-height:13px;color:#1f1f1f;letter-spacing:-0.341px;left:799.2px;">Trường THPT</span>
<span class="t" style="top:767.0px;font-size:13px;line-height:13px;color:#1f1f1f;letter-spacing:-0.249px;left:1341px;">Cấp I (Nhà, công trình xây dựn...</span>
<span class="t" style="top:767.0px;font-size:13px;line-height:13px;color:#1f1f1f;letter-spacing:-0.158px;left:1541px;">Nhà cấp I</span>
<span class="t" style="top:767.0px;font-size:13px;line-height:13px;color:#1f1f1f;letter-spacing:-1.005px;left:1741px;">VPUB</span>
<svg style="left:1847px;top:765px" width="16" height="16" viewBox="0 0 16 16" fill="none" stroke="#e03a0c"><path d="M1.2 5.45H14.8" stroke-width="1.3" stroke-linecap="round"/><path d="M4.7 5.1L5.5 2.7Q5.9 1.7 7 1.7H9Q10.1 1.7 10.5 2.7L11.3 5.1" stroke-width="1" opacity=".75"/><path d="M3 5.8V12.3Q3 15.1 5.5 15.1H10.5Q13 15.1 13 12.3V5.8" stroke-width="1.1" opacity=".75"/><path d="M6.5 7.4V11.6M9.6 7.4V11.6" stroke-width="1.4" stroke-linecap="round"/></svg>
</main>
<section class="g">
<span class="t" style="top:845.0px;font-size:13px;line-height:13px;color:#1f1f1f;letter-spacing:-0.015px;left:27px;">Tổng số: <b>215</b> bản ghi</span>
<span class="t" style="top:845.0px;font-size:13px;line-height:13px;color:#1f1f1f;letter-spacing:0.117px;left:1574.7px;">Số dòng/trang</span>
<span class="t" style="top:845.0px;font-size:13px;line-height:13px;color:#1f1f1f;letter-spacing:-0.15px;left:1668.7px;">20</span>
<svg style="left:1696px;top:846px" width="12" height="10" viewBox="0 0 12 10"><path d="M1.8 2.6L6 6.8L10.2 2.6" stroke="#111" stroke-width="2" fill="none"/></svg>
<span class="t" style="top:845.77px;font-size:11.5px;line-height:11.5px;color:#8a8a8a;left:1739px;">&lt;</span>
<span class="t" style="top:845.0px;font-size:13px;line-height:13px;color:#1f1f1f;letter-spacing:-0.124px;left:1755.9px;">Trang</span>
<span class="t" style="top:845.0px;font-size:13px;line-height:13px;color:#1f1f1f;font-weight:700;letter-spacing:-0.45px;left:1804.3px;">1</span>
<span class="t" style="top:845.0px;font-size:13px;line-height:13px;color:#1f1f1f;letter-spacing:-0.15px;left:1820.9px;">2</span>
<span class="t" style="top:845.0px;font-size:13px;line-height:13px;color:#1f1f1f;letter-spacing:-0.727px;left:1838.8px;">...</span>
<span class="t" style="top:845.0px;font-size:13px;line-height:13px;color:#1f1f1f;letter-spacing:-0.15px;left:1859px;">11</span>
<span class="t" style="top:845.77px;font-size:11.5px;line-height:11.5px;color:#1f1f1f;left:1888.7px;">&gt;</span>
<div style="left:0px;top:870px;width:1919px;height:1px;background:#d4d7e2;"></div>
</section>
<footer class="g">
<div class="inp" style="left:1697px;top:880px;width:62px;height:32px;"></div>
<span class="t" style="top:888.5px;font-size:13px;line-height:13px;color:#1f1f1f;letter-spacing:-0.896px;-webkit-text-stroke:0.35px #1f1f1f;left:1713.5px;">Đóng</span>
<div style="left:1767px;top:880px;width:66px;height:32px;background:#f1f2f5;border-radius:4px;"></div>
<svg style="left:1783px;top:887px" width="20" height="19" viewBox="0 0 20 19" fill="none" stroke="#474747" stroke-width="1.3" stroke-linejoin="round"><path d="M5.9 4.6V3Q5.9 0.9 8 0.9H12.2Q14.3 0.9 14.3 3V4.6"/><rect x="1.65" y="4.6" width="16.8" height="9.9" rx="3.4"/><rect x="5.3" y="10.9" width="9.4" height="7" rx="2.3" fill="#f1f2f5"/><path d="M13.4 7.5H15.6" stroke-linecap="round"/></svg>
<span class="t" style="top:888.5px;font-size:13px;line-height:13px;color:#a3a7b4;letter-spacing:-0.15px;left:1807.3px;">In</span>
<div style="left:1841px;top:880px;width:64px;height:32px;background:#2b52ec;border-radius:4px;"></div>
<span class="t" style="top:889.09px;font-size:12.3px;line-height:12.3px;color:#fff;font-weight:700;letter-spacing:-0.784px;left:1862.4px;">Lưu</span>
</footer>
<aside class="g">
<div style="left:1905px;top:332px;width:20px;height:90px;background:#2b4fe8;border-radius:7px 0 0 7px;box-shadow:0 2px 5px rgba(0,0,0,0.3);"></div>
<svg style="left:1910px;top:372px" width="7" height="9" viewBox="0 0 7 9"><path d="M5.2 0.8L1.5 4.4L5.2 8" stroke="#fff" stroke-width="1.5" fill="none"/></svg>
<div style="left:1927px;top:736px;width:10px;height:146px;background:#000;box-shadow:0 0 18px 7px rgba(0,0,0,0.68);"></div>
<div style="left:0px;top:0px;width:1922px;height:921px;border:1px solid #000;border-top-width:1px;pointer-events:none;"></div>
</aside>
</div>
</body></html>
